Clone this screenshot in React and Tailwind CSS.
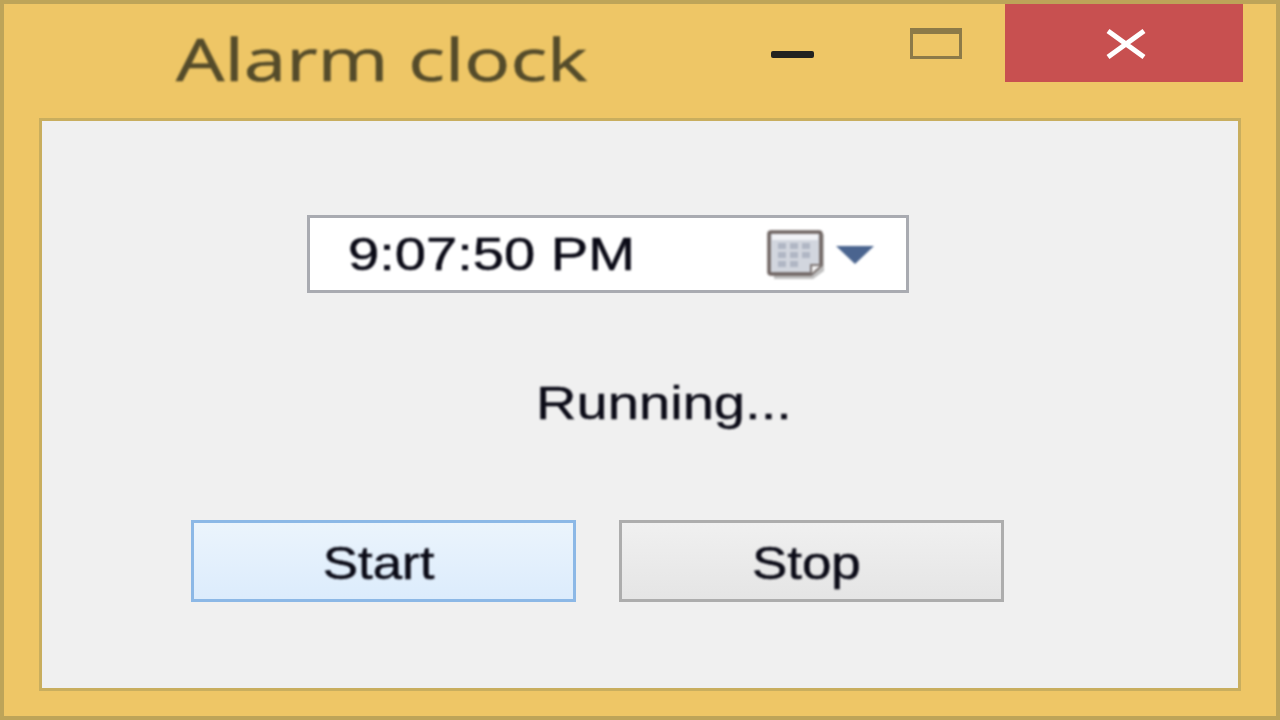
export default function App() {
  return (
    <div className="w-[1280px] h-[720px] overflow-hidden flex flex-col border-4 border-[#bda459] bg-[#eec666] font-['Liberation_Sans',Arial,sans-serif] text-[#0a0a16]">
      <div className="h-[114px] shrink-0 flex items-start pr-[33px]">
        <div className="ml-[172px] mt-[21px] font-['Open_Sans',sans-serif] text-[58px] leading-[68px] text-[#544b2a] origin-left scale-x-[1.32] blur-[0.8px] whitespace-nowrap [-webkit-text-stroke:0.5px_#544b2a]">
          Alarm clock
        </div>
        <div className="ml-auto flex items-start">
          <div className="mt-[47px] w-[43px] h-[7px] rounded-[2px] bg-[#222220] blur-[0.6px]" />
          <div className="ml-[96px] mt-[24px] w-[52px] h-[31px] border-[3px] border-t-[6px] border-[#8c7a48] blur-[0.7px]" />
          <div className="ml-[43px] w-[238px] h-[78px] bg-[#c85050] flex items-center justify-center">
            <svg width="42" height="30" viewBox="0 0 42 30" className="blur-[0.7px] ml-[4px] mt-[2px]">
              <path d="M3 2 L39 28 M39 2 L3 28" stroke="#fff" strokeWidth="5" fill="none" />
            </svg>
          </div>
        </div>
      </div>
      <div className="mx-[35px] h-[573px] shrink-0 border-[3px] border-[#c9ae5e] bg-[#f0f0f0] flex flex-col">
        <div className="ml-[265px] mt-[94px] w-[602px] h-[78px] border-[3px] border-[#a9abb1] bg-white flex items-center shrink-0">
          <span className="ml-[38px] text-[46px] leading-none origin-left scale-x-[1.22] blur-[0.9px] whitespace-nowrap [-webkit-text-stroke:0.5px_#0a0a16]">9:07:50 PM</span>
          <div className="ml-auto mr-[31px] flex items-center blur-[0.8px]">
            <svg width="60" height="50" viewBox="0 0 60 50" className="block">
              <path d="M6 5 H58 V42 L47 50 H8 Z" fill="#00000040" />
              <path d="M5 3 H53 Q55 3 55 5 V36 L45 45 H5 Q3 45 3 43 V5 Q3 3 5 3 Z" fill="#d2d6de" stroke="#6e6360" strokeWidth="3.5" />
              <path d="M45 45 V36 H55" fill="#f4f4f4" stroke="#7e7674" strokeWidth="2" />
              <path d="M6 5 H52 V11 H6 Z" fill="#f1f2f6" />
              <path d="M12 14 h8 v6 h-8z M24 14 h8 v6 h-8z M36 14 h8 v6 h-8z M12 23 h8 v6 h-8z M24 23 h8 v6 h-8z M36 23 h8 v6 h-8z M12 32 h8 v6 h-8z M24 32 h8 v6 h-8z" fill="#b0b6c4" />
            </svg>
            <svg width="40" height="20" viewBox="0 0 40 20" className="block ml-[9px] mt-[1px]">
              <path d="M1 1 H39 L20 19 Z" fill="#4a648f" />
            </svg>
          </div>
        </div>
        <div className="ml-[494px] mt-[85px] text-[46px] leading-[50px] h-[50px] origin-left scale-x-[1.22] blur-[0.9px] whitespace-nowrap shrink-0 [-webkit-text-stroke:0.4px_#0a0a16]">
          Running...
        </div>
        <div className="ml-[149px] mt-[92px] flex gap-[43px]">
          <button className="w-[385px] h-[82px] border-[3px] border-[#8cb8e6] bg-gradient-to-b from-[#ebf4fc] to-[#dcecfc] flex items-center justify-center pt-[3px]">
            <span className="mr-[10px] text-[46px] leading-none scale-x-[1.15] blur-[0.9px] [-webkit-text-stroke:0.5px_#0a0a16]">Start</span>
          </button>
          <button className="w-[385px] h-[82px] border-[3px] border-[#adadad] bg-gradient-to-b from-[#f0f0f0] to-[#e5e5e5] flex items-center justify-center pt-[3px]">
            <span className="mr-[10px] text-[46px] leading-none scale-x-[1.15] blur-[0.9px] [-webkit-text-stroke:0.5px_#0a0a16]">Stop</span>
          </button>
        </div>
      </div>
    </div>
  );
}
